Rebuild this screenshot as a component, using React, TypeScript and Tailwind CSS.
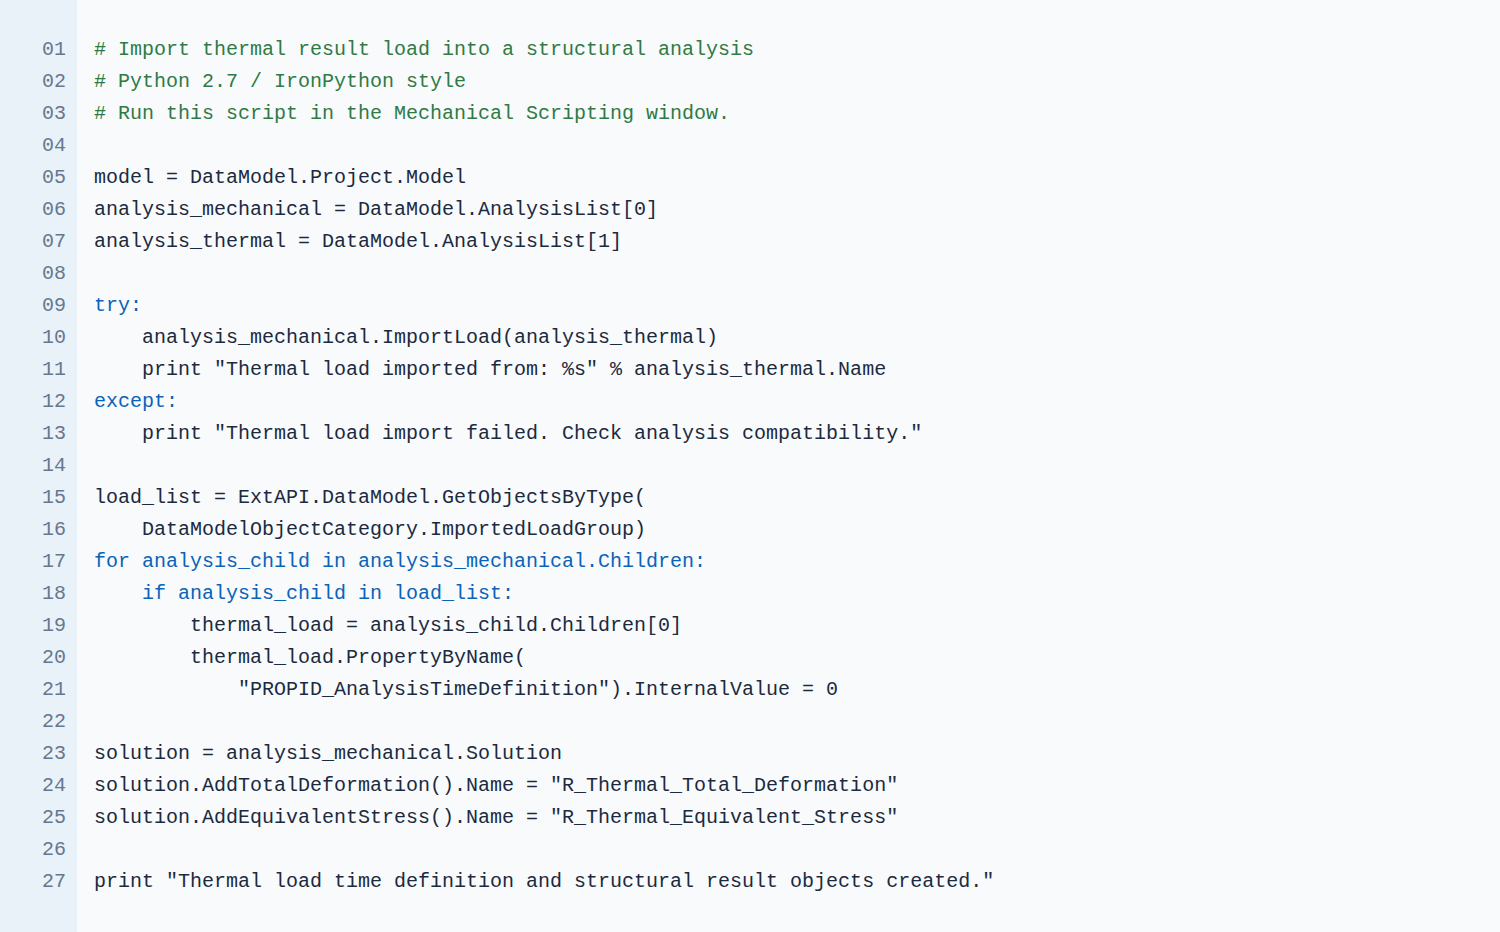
import React from "react";

type Line = { text: string; kind?: "comment" | "keyword" };

const lines: Line[] = [
  { text: "# Import thermal result load into a structural analysis", kind: "comment" },
  { text: "# Python 2.7 / IronPython style", kind: "comment" },
  { text: "# Run this script in the Mechanical Scripting window.", kind: "comment" },
  { text: "" },
  { text: "model = DataModel.Project.Model" },
  { text: "analysis_mechanical = DataModel.AnalysisList[0]" },
  { text: "analysis_thermal = DataModel.AnalysisList[1]" },
  { text: "" },
  { text: "try:", kind: "keyword" },
  { text: "    analysis_mechanical.ImportLoad(analysis_thermal)" },
  { text: '    print "Thermal load imported from: %s" % analysis_thermal.Name' },
  { text: "except:", kind: "keyword" },
  { text: '    print "Thermal load import failed. Check analysis compatibility."' },
  { text: "" },
  { text: "load_list = ExtAPI.DataModel.GetObjectsByType(" },
  { text: "    DataModelObjectCategory.ImportedLoadGroup)" },
  { text: "for analysis_child in analysis_mechanical.Children:", kind: "keyword" },
  { text: "    if analysis_child in load_list:", kind: "keyword" },
  { text: "        thermal_load = analysis_child.Children[0]" },
  { text: "        thermal_load.PropertyByName(" },
  { text: '            "PROPID_AnalysisTimeDefinition").InternalValue = 0' },
  { text: "" },
  { text: "solution = analysis_mechanical.Solution" },
  { text: 'solution.AddTotalDeformation().Name = "R_Thermal_Total_Deformation"' },
  { text: 'solution.AddEquivalentStress().Name = "R_Thermal_Equivalent_Stress"' },
  { text: "" },
  { text: 'print "Thermal load time definition and structural result objects created."' },
];

export default function App() {
  return (
    <div className="flex min-h-[932px] w-full bg-[#f8fafc] font-['Liberation_Mono','DejaVu_Sans_Mono',monospace] text-[20px] leading-[32px]">
      <div className="w-[77px] shrink-0 bg-[#e9f1f9] pt-[34px] pr-[11px] text-right text-[#66788f]">
        {lines.map((_, i) => (
          <div key={i}>{String(i + 1).padStart(2, "0")}</div>
        ))}
      </div>
      <div className="flex-1 pt-[34px] pl-[17px] text-[#1c2a40]">
        {lines.map((l, i) => (
          <div
            key={i}
            className={
              l.kind === "comment"
                ? "whitespace-pre text-[#2f7a45]"
                : l.kind === "keyword"
                ? "whitespace-pre text-[#0a63b8]"
                : "whitespace-pre"
            }
          >
            {l.text || " "}
          </div>
        ))}
      </div>
    </div>
  );
}
